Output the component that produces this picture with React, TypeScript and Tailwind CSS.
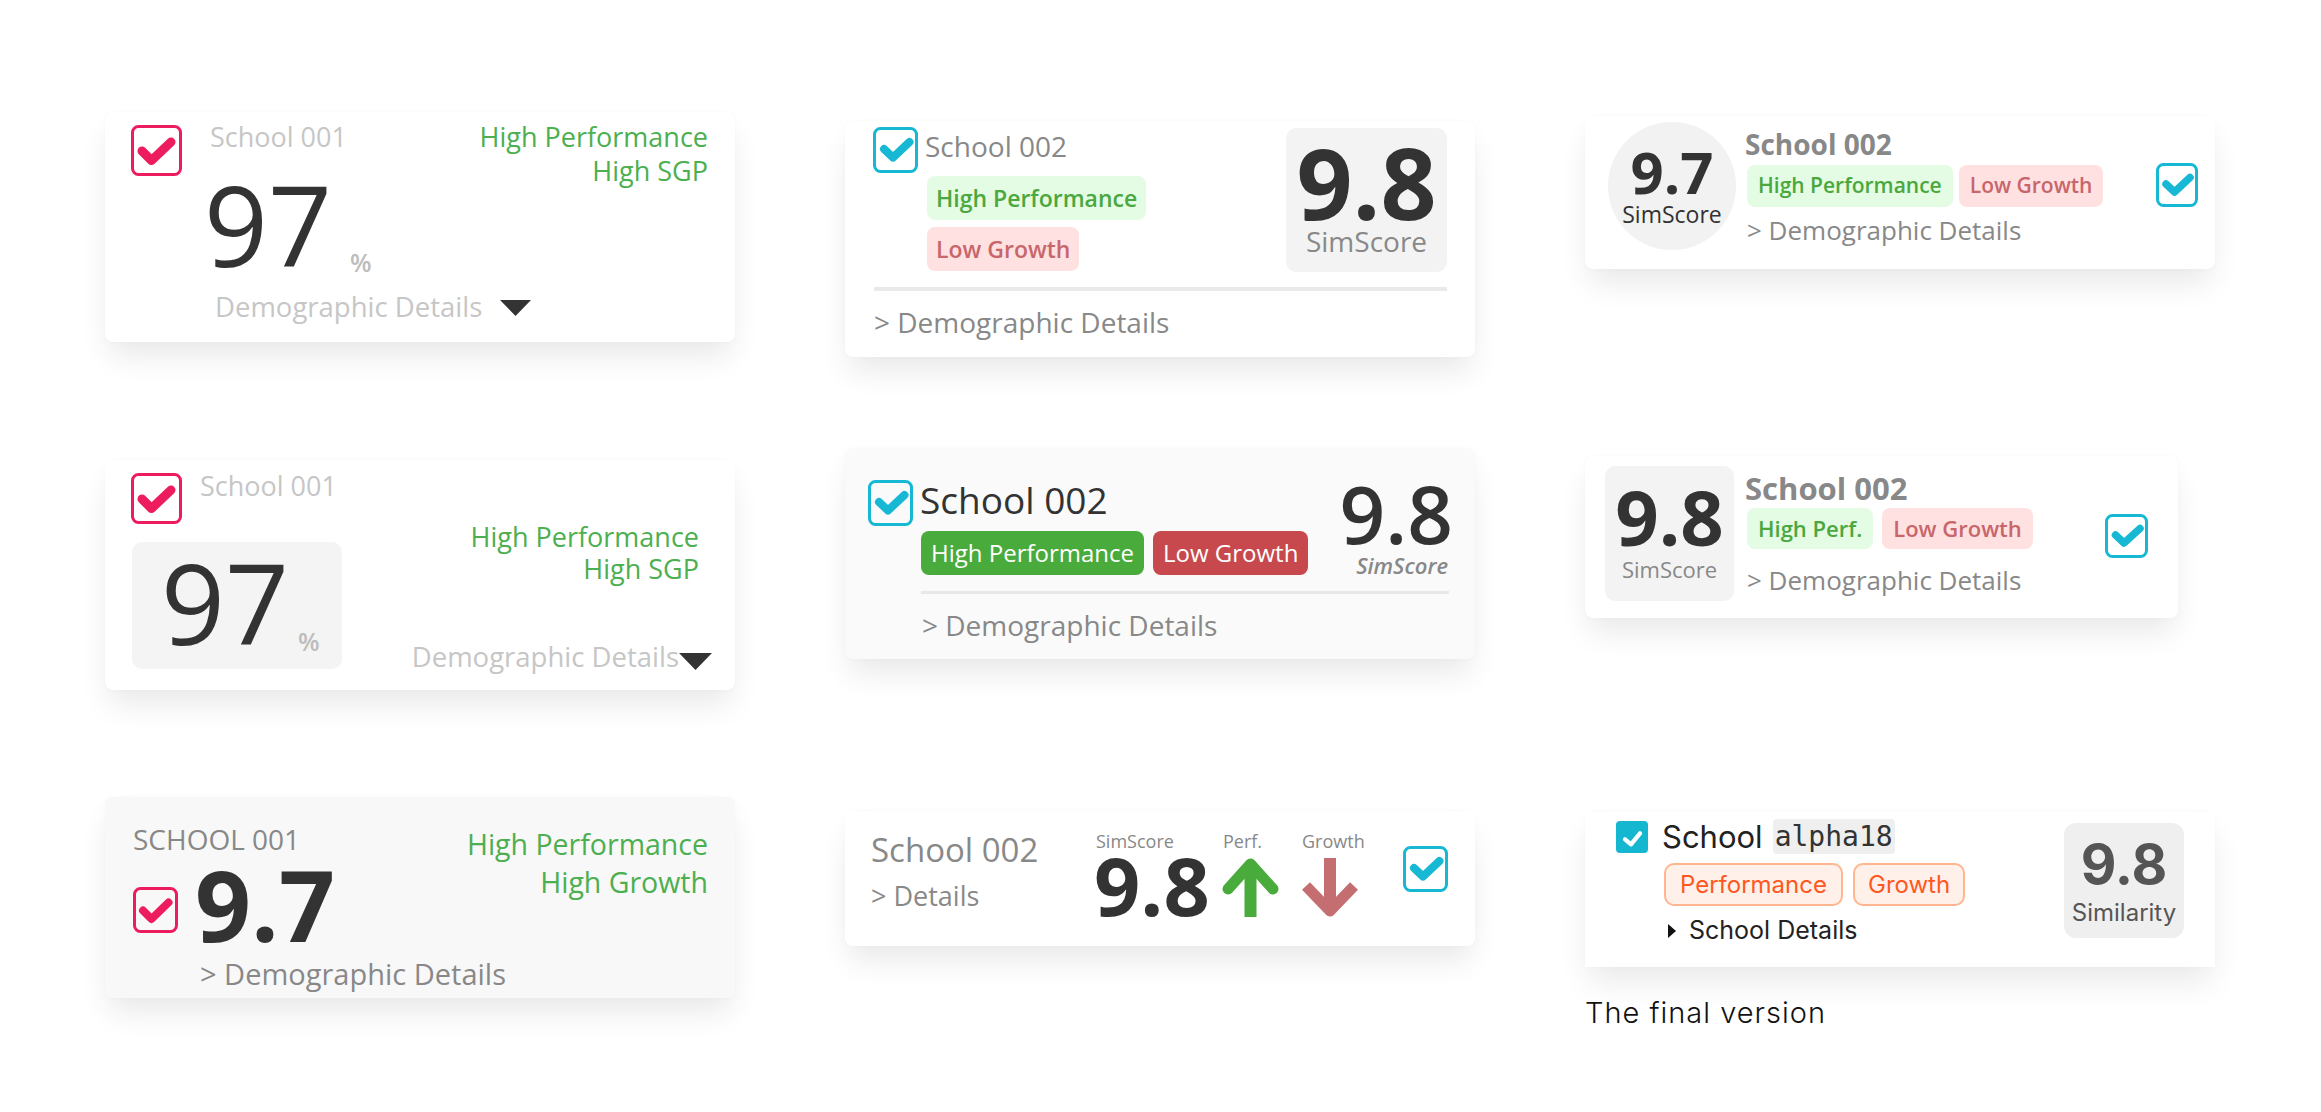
import React from "react";

const PINK = "#ec1c5e";
const CYAN = "#17b8d3";
const SHADOW =
  "shadow-[0_18px_30px_-4px_rgba(0,0,0,0.09),0_0_6px_rgba(0,0,0,0.025)]";

// outlined checkbox with a thick tick
function BoxCheck({
  w,
  h,
  color,
  pts,
  sw,
}: {
  w: number;
  h: number;
  color: string;
  pts: string;
  sw: number;
}) {
  return (
    <svg width={w} height={h} viewBox={`0 0 ${w} ${h}`} className="block shrink-0">
      <rect x="1.5" y="1.5" width={w - 3} height={h - 3} rx="6" fill="none" stroke={color} strokeWidth="3" />
      <polyline points={pts} fill="none" stroke={color} strokeWidth={sw} strokeLinecap="round" strokeLinejoin="round" />
    </svg>
  );
}

const PinkCheck = () => <BoxCheck w={51} h={51} color={PINK} pts="11,26 20.5,35.5 40,17" sw={9} />;
const PinkCheckSm = () => <BoxCheck w={45} h={46} color={PINK} pts="10,23.5 18.5,32 35.5,15.5" sw={8} />;
const CyanCheck = () => <BoxCheck w={45} h={46} color={CYAN} pts="11,22 20,30.5 36.5,15" sw={8} />;
const CyanCheckSm = () => <BoxCheck w={43} h={44} color={CYAN} pts="10.5,21 19,29 35,14.5" sw={7.5} />;

function TriDown({ w, h, className = "" }: { w: number; h: number; className?: string }) {
  return (
    <svg width={w} height={h} viewBox={`0 0 ${w} ${h}`} className={`block shrink-0 ${className}`}>
      <polygon points={`0,0 ${w},0 ${w / 2},${h}`} fill="#333" />
    </svg>
  );
}

function Card({ className, children }: { className: string; children: React.ReactNode }) {
  return <div className={`shrink-0 ${SHADOW} ${className}`}>{children}</div>;
}

export default function App() {
  return (
    <div className="min-h-[1112px] w-full whitespace-nowrap bg-white pl-[105px] pt-[106px] font-['Open_Sans',sans-serif]">
      {/* row 1 */}
      <div className="flex h-[342px] items-start gap-[110px]">
        {/* A1 */}
        <Card className="mt-[6px] flex h-[230px] w-[630px] flex-col rounded-lg bg-white pl-[26px] pr-[27px]">
          <div className="flex items-start justify-between">
            <div className="mt-[13px] flex items-start">
              <PinkCheck />
              <div className="ml-[22px] flex flex-col">
                <div className="ml-[6px] -mt-[2px] text-[27px] leading-none text-[#c6c6c6]">School 001</div>
                <div className="mt-[18px] flex items-baseline">
                  <span className="text-[112px] leading-none text-[#333]">97</span>
                  <span className="relative top-[5px] ml-[18px] text-[25px] font-semibold leading-none text-[#bdbdbd]">%</span>
                </div>
              </div>
            </div>
            <div className="mt-[8px] text-right text-[27px] leading-[34px] text-[#4caf50]">
              <div>High Performance</div>
              <div>High SGP</div>
            </div>
          </div>
          <div className="ml-[84px] mt-[13px] flex items-center">
            <span className="text-[27.5px] leading-none text-[#c6c6c6]">Demographic Details</span>
            <TriDown w={31} h={16} className="ml-[18px] mt-[3px]" />
          </div>
        </Card>

        {/* B1 */}
        <Card className="mt-[15px] flex h-[236px] w-[630px] flex-col rounded-lg bg-white px-[28px] pt-[6px]">
          <div className="flex items-start justify-between">
            <div className="flex items-start">
              <CyanCheck />
              <div className="ml-[7px] mt-[5px] flex flex-col items-start">
                <div className="text-[28px] leading-none text-[#888]">School 002</div>
                <div className="ml-[2px] mt-[16px] flex h-[44px] items-center rounded-lg bg-[#e4fbe4] px-[9px] text-[23px] font-semibold text-[#4aa83e]">
                  High Performance
                </div>
                <div className="ml-[2px] mt-[7px] flex h-[44px] items-center rounded-lg bg-[#ffe1e1] px-[9px] text-[23px] font-semibold text-[#c7666b]">
                  Low Growth
                </div>
              </div>
            </div>
            <div className="mt-[1px] flex h-[144px] w-[161px] flex-col items-center rounded-[10px] bg-[#f3f3f3] pt-[5px]">
              <div className="text-[98px] font-bold leading-none text-[#333]">9.8</div>
              <div className="-mt-[4px] text-[28px] leading-none text-[#888]">SimScore</div>
            </div>
          </div>
          <div className="ml-[1px] mt-[15px] h-[4px] bg-[#e9e9e9]" />
          <div className="ml-[1px] mt-[17px] text-[28px] leading-none text-[#888]">&gt; Demographic Details</div>
        </Card>

        {/* C1 */}
        <Card className="mt-[10px] flex h-[153px] w-[630px] items-start rounded-lg bg-white pl-[23px] pr-[17px]">
          <div className="mt-[6px] flex h-[128px] w-[128px] flex-col items-center rounded-full bg-[#f2f2f2] pt-[21px]">
            <div className="text-[58px] font-bold leading-none text-[#333]">9.7</div>
            <div className="mt-[2px] text-[23px] leading-none text-[#333]">SimScore</div>
          </div>
          <div className="ml-[9px] mt-[14px] flex flex-col items-start">
            <div className="text-[28px] font-bold leading-none text-[#888]">School 002</div>
            <div className="ml-[2px] mt-[7px] flex gap-[6px]">
              <div className="flex h-[42px] items-center rounded-lg bg-[#e4fbe4] px-[11px] text-[21px] font-semibold text-[#4aa83e]">
                High Performance
              </div>
              <div className="flex h-[42px] items-center rounded-lg bg-[#ffe1e1] px-[11px] text-[21px] font-semibold text-[#c7666b]">
                Low Growth
              </div>
            </div>
            <div className="ml-[2px] mt-[10px] text-[26px] leading-none text-[#888]">&gt; Demographic Details</div>
          </div>
          <div className="ml-auto mt-[47px]">
            <BoxCheck w={42} h={44} color={CYAN} pts="10,21 18.5,29 34,14.5" sw={7.5} />
          </div>
        </Card>
      </div>

      {/* row 2 */}
      <div className="flex h-[349px] items-start gap-[110px]">
        {/* A2 */}
        <Card className="mt-[12px] flex h-[230px] w-[630px] justify-between rounded-lg bg-white pl-[26px] pr-[23px]">
          <div className="flex flex-col pt-[12px]">
            <div className="flex items-start">
              <div className="mt-[1px]">
                <PinkCheck />
              </div>
              <div className="ml-[18px] text-[27px] leading-none text-[#c6c6c6]">School 001</div>
            </div>
            <div className="ml-[1px] mt-[18px] flex h-[127px] w-[210px] items-baseline rounded-[10px] bg-[#f4f4f4] pl-[29px] pt-[4px]">
              <span className="text-[112px] leading-none text-[#333]">97</span>
              <span className="relative top-[6px] ml-[9px] text-[25px] font-semibold leading-none text-[#bdbdbd]">%</span>
            </div>
          </div>
          <div className="flex flex-col items-end">
            <div className="mr-[13px] mt-[61px] text-right text-[27px] leading-[32px] text-[#4caf50]">
              <div>High Performance</div>
              <div>High SGP</div>
            </div>
            <div className="mt-[58px] flex items-end">
              <span className="text-[27.5px] leading-none text-[#c6c6c6]">Demographic Details</span>
              <TriDown w={33} h={17} className="mb-[1px]" />
            </div>
          </div>
        </Card>

        {/* B2 */}
        <Card className="flex h-[211px] w-[630px] items-start rounded-lg bg-[#fafafa] pl-[23px] pr-[22px] pt-[25px]">
          <div className="mt-[7px]">
            <CyanCheck />
          </div>
          <div className="ml-[7px] flex flex-1 flex-col">
            <div className="flex items-start justify-between">
              <div className="mt-[8px] flex flex-col items-start">
                <div className="text-[37px] leading-none text-[#333]">School 002</div>
                <div className="ml-[1px] mt-[13px] flex gap-[9px]">
                  <div className="flex h-[44px] items-center rounded-lg bg-[#4aab3d] px-[10px] text-[24px] font-medium text-white">
                    High Performance
                  </div>
                  <div className="flex h-[44px] items-center rounded-lg bg-[#c8494d] px-[10px] text-[24px] font-medium text-white">
                    Low Growth
                  </div>
                </div>
              </div>
              <div className="flex flex-col items-end">
                <div className="text-[80px] font-semibold leading-none text-[#333]">9.8</div>
                <div className="mr-[5px] mt-[1px] text-[22px] font-semibold italic leading-none text-[#888]">SimScore</div>
              </div>
            </div>
            <div className="ml-[1px] mr-[4px] mt-[15px] h-[3px] bg-[#e8e8e8]" />
            <div className="ml-[2px] mt-[17px] text-[28px] leading-none text-[#888]">&gt; Demographic Details</div>
          </div>
        </Card>

        {/* C2 */}
        <Card className="mt-[8px] flex h-[162px] w-[593px] items-start rounded-lg bg-white pl-[20px] pr-[30px]">
          <div className="mt-[10px] flex h-[135px] w-[129px] flex-col items-center rounded-[10px] bg-[#f3f3f3] pt-[13px]">
            <div className="text-[76px] font-bold leading-none text-[#333]">9.8</div>
            <div className="mt-[3px] text-[22px] leading-none text-[#888]">SimScore</div>
          </div>
          <div className="ml-[11px] mt-[17px] flex flex-col items-start">
            <div className="text-[31px] font-bold leading-none text-[#888]">School 002</div>
            <div className="ml-[2px] mt-[4px] flex gap-[9px]">
              <div className="flex h-[41px] items-center rounded-lg bg-[#e4fbe4] px-[11px] text-[22px] font-semibold text-[#4aa83e]">
                High Perf.
              </div>
              <div className="flex h-[41px] items-center rounded-lg bg-[#ffe1e1] px-[11px] text-[22px] font-semibold text-[#c7666b]">
                Low Growth
              </div>
            </div>
            <div className="ml-[2px] mt-[18px] text-[26px] leading-none text-[#888]">&gt; Demographic Details</div>
          </div>
          <div className="ml-auto mt-[58px]">
            <CyanCheckSm />
          </div>
        </Card>
      </div>

      {/* row 3 */}
      <div className="flex items-start gap-[110px]">
        {/* A3 */}
        <Card className="flex h-[201px] w-[630px] flex-col rounded-lg bg-[#f8f8f8] pl-[28px] pr-[27px]">
          <div className="flex items-start justify-between">
            <div className="flex flex-col items-start">
              <div className="mt-[28px] text-[28px] leading-none text-[#888]">SCHOOL 001</div>
              <div className="mt-[2px] flex items-start">
                <div className="mt-[32px]">
                  <PinkCheckSm />
                </div>
                <div className="ml-[17px] text-[98px] font-bold leading-none text-[#333]">9.7</div>
              </div>
            </div>
            <div className="mt-[28px] text-right text-[28.5px] leading-[38px] text-[#4caf50]">
              <div>High Performance</div>
              <div>High Growth</div>
            </div>
          </div>
          <div className="ml-[67px] mt-[6px] text-[29px] leading-none text-[#888]">&gt; Demographic Details</div>
        </Card>

        {/* B3 */}
        <Card className="mt-[14px] flex h-[135px] w-[630px] items-start rounded-lg bg-white pl-[26px]">
          <div className="flex w-[223px] flex-col">
            <div className="mt-[22px] text-[33px] leading-none text-[#888]">School 002</div>
            <div className="mt-[16px] text-[27px] leading-none text-[#888]">&gt; Details</div>
          </div>
          <div className="mt-[21px] flex w-[117px] flex-col">
            <div className="ml-[2px] text-[18px] leading-none text-[#888]">SimScore</div>
            <div className="-mt-[6px] text-[81px] font-bold leading-none text-[#333]">9.8</div>
          </div>
          <div className="ml-[11px] mt-[21px] flex w-[57px] flex-col">
            <div className="ml-[1px] text-[18px] leading-none text-[#888]">Perf.</div>
            <svg width="57" height="59" viewBox="0 0 57 59" className="mt-[8px] block">
              <line x1="28.5" y1="10" x2="28.5" y2="59" stroke="#4aab3d" strokeWidth="12" />
              <polyline points="6,31 28.5,6 51,31" fill="none" stroke="#4aab3d" strokeWidth="11" strokeLinecap="round" strokeLinejoin="round" />
            </svg>
          </div>
          <div className="ml-[22px] mt-[21px] flex w-[63px] flex-col">
            <div className="ml-[1px] text-[18px] leading-none text-[#888]">Growth</div>
            <svg width="58" height="59" viewBox="0 0 58 59" className="mt-[8px] block">
              <line x1="29" y1="0" x2="29" y2="49" stroke="#c46e71" strokeWidth="12" />
              <polyline points="5,28 29,53 53,28" fill="none" stroke="#c46e71" strokeWidth="11" strokeLinejoin="round" />
            </svg>
          </div>
          <div className="ml-[39px] mt-[35px]">
            <CyanCheck />
          </div>
        </Card>

        {/* C3 + caption */}
        <div className="mt-[15px] flex shrink-0 flex-col font-['Inter',sans-serif]">
          <Card className="flex h-[155px] w-[630px] items-start bg-white pl-[31px] pr-[31px]">
            <div className="mt-[9px] flex h-[32px] w-[32px] items-center justify-center rounded-[4px] bg-[#14b6d0]">
              <svg width="32" height="32" viewBox="0 0 32 32" className="block">
                <polyline points="9,18.3 15,23.3 24,12.3" fill="none" stroke="white" strokeWidth="4.3" strokeLinecap="round" strokeLinejoin="round" />
              </svg>
            </div>
            <div className="ml-[14px] mt-[7px] flex flex-col items-start">
              <div className="flex h-[35px] items-center">
                <span className="text-[31px] leading-none text-[#222]">School</span>
                <span className="ml-[10px] flex h-[35px] items-center rounded-[4px] bg-[#efefef] px-[2px] font-['DejaVu_Sans_Mono',monospace] text-[28px] leading-none text-[#333]">
                  alpha18
                </span>
              </div>
              <div className="ml-[2px] mt-[9px] flex gap-[10px]">
                <div className="flex h-[43px] items-center rounded-[10px] border-2 border-[#ffb58e] bg-[#fff1e9] px-[14px] text-[24px] text-[#ff5722]">
                  Performance
                </div>
                <div className="flex h-[43px] items-center rounded-[10px] border-2 border-[#ffb58e] bg-[#fff1e9] px-[13px] text-[24px] text-[#ff5722]">
                  Growth
                </div>
              </div>
              <div className="ml-[6px] mt-[12px] flex items-center">
                <svg width="8" height="14" viewBox="0 0 8 14" className="block">
                  <polygon points="0,0 8,7 0,14" fill="#111" />
                </svg>
                <span className="ml-[13px] text-[25px] leading-none text-[#222]">School Details</span>
              </div>
            </div>
            <div className="ml-auto mt-[11px] flex h-[115px] w-[120px] flex-col items-center rounded-[12px] bg-[#efefef] pt-[14px]">
              <div className="text-[55px] font-bold leading-none text-[#555]">9.8</div>
              <div className="mt-[9px] text-[24px] leading-none text-[#555]">Similarity</div>
            </div>
          </Card>
          <div className="mt-[31px] text-[29px] font-light leading-none tracking-[1px] text-[#111]">The final version</div>
        </div>
      </div>
    </div>
  );
}
